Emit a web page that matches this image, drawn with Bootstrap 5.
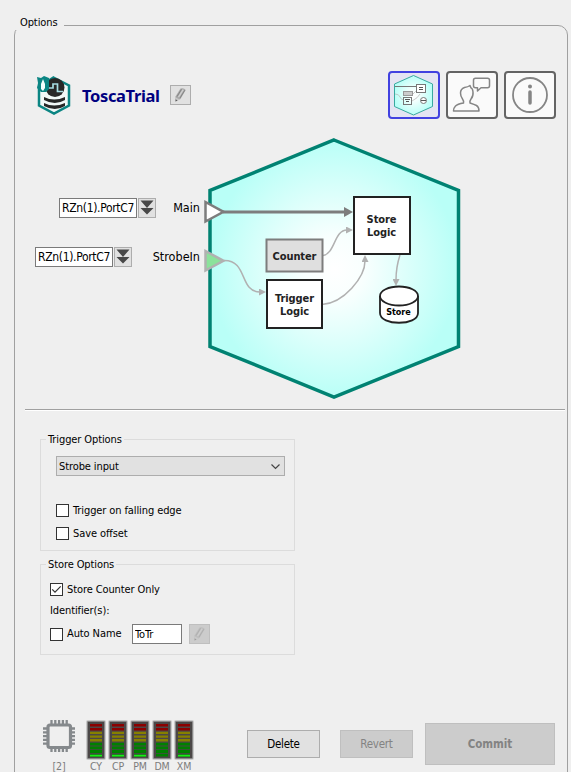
<!DOCTYPE html>
<html lang="en">
<head>
<meta charset="utf-8">
<title>Options</title>
<link href="https://cdn.jsdelivr.net/npm/bootstrap@5.3.0/dist/css/bootstrap.min.css" rel="stylesheet">
<style>
html,body{height:772px;overflow:hidden}
body{background:#efefef;color:#000;font:11px/14px "DejaVu Sans Condensed","DejaVu Sans",sans-serif;font-stretch:condensed;letter-spacing:-.1px}
svg{display:block;flex:none}
.options-box{margin:0 3px 0 14px;height:760px;border:1px solid #a0a0a0;border-radius:10px}
.box-title{width:max-content;background:#efefef;white-space:nowrap;height:14px}
.options-box>.box-title{margin:-10px 0 0 -1px;padding:0 8px 0 6px;width:50px}
.head-row{margin:41px 11px 0 21px;height:48px}
.unit-name{font:bold 16.5px/22px "Noto Sans","Open Sans",sans-serif;color:#000080;letter-spacing:-.35px;width:77px;margin:2px 11px 0 10px;white-space:nowrap}
.tool{padding:0;border:1px solid #adadad;border-radius:0;background:#e1e1e1;display:flex;align-items:center;justify-content:center}
.tool:disabled{background:#ccc;border-color:#bfbfbf;opacity:1}
.tool-edit{width:21px;height:20px}
.tool-drop{width:18px;height:20px}
.view-btn{width:52px;height:48px;padding:0;border:2px solid #646464;border-radius:4px;background:#fafafa;display:flex;align-items:center;justify-content:center}
.view-btn.chosen{border-color:#4141e0;background:#e4e4f2}
.diagram-row{margin-left:10px;height:290px}
.ports{width:175px;padding-top:79px;font-size:12.5px;letter-spacing:0}
.port{height:20px}
.port+.port{margin-top:29px}
.field{border:1px solid #7a7a7a;border-radius:0;background:#fff;color:#000;padding:0 2px;height:20px;font:inherit;letter-spacing:inherit;outline:0;min-width:0}
.port .field{width:78px;margin-right:1px;font-size:12px;letter-spacing:-.33px}
.port-main{width:141px}.port-strobe{width:165px}
.port-label{white-space:nowrap}
.rule{height:2px;background:#a0a0a0;border-bottom:1px solid #fff;margin:0 2px 0 10px}
.group{width:255px;margin-left:25px;border:1px solid #dcdcdc}
.group>.box-title{margin:-7px 0 0 5px;padding:0 2px}
.pick{width:229px;height:20px;margin:9px 0 0 15px;padding:1px 4px 0 2px;border:1px solid #adadad;border-radius:0;background:#e1e1e1;color:#000;font:inherit;letter-spacing:inherit}
.tick{height:13px;white-space:nowrap}
.tick .form-check-input{width:13px;height:13px;margin:0 4px 0 0;border:1px solid #333;border-radius:0;background-color:#fff;float:none;flex:none}
.tick .form-check-input:checked{background-size:11px;background-image:url("data:image/svg+xml,%3Csvg xmlns='http://www.w3.org/2000/svg' viewBox='0 0 11 11'%3E%3Cpath d='M1.2 5.4 4 8.2 9.7 2.4' fill='none' stroke='%23333' stroke-width='1.2'/%3E%3C/svg%3E")}
.foot{margin:65px 12px 0 28px;color:#7c7c7c;font-size:10.5px;line-height:10px}
.foot-label{height:10px}
.cmd{padding:0;border:1px solid #adadad;border-radius:0;background:#e1e1e1;color:#000;width:73px;height:28px;font:11.5px/14px "DejaVu Sans Condensed","DejaVu Sans",sans-serif;letter-spacing:-.25px}
.cmd:disabled{background:#ccc;border-color:#bfbfbf;color:#838383;opacity:1}
.cmd-commit{width:130px;height:42px;font-weight:bold;letter-spacing:-.05px}
.meter{width:22px}
</style>
</head>
<body>
<svg width="0" height="0" class="position-absolute">
<defs>
<radialGradient id="glow" gradientUnits="objectBoundingBox"><stop offset="0" stop-color="#fff"/><stop offset=".25" stop-color="#f8fffe"/><stop offset="1" stop-color="#b9fff7"/></radialGradient>
<symbol id="pencil" viewBox="0 0 19 18"><path d="M4.5 15.500 4.500 10.500 9.500 2.500Q13 1.500 14.700 4L9.500 13Z" fill="#a8a8a8"/><path d="M6 10.500 10.500 3.300M9 12l4.800-7.800" stroke="#858585"/><path d="m7.500 11.200 4.700-7.500" stroke="#d0d0d0" stroke-width="1.300"/><path d="m4.800 11.500 3.900 2-4.200 2Z" fill="#c9c9c9"/><path d="m4.500 15.500.2-2.300 1.800 1.200Z" fill="#555"/></symbol>
<symbol id="drop" viewBox="0 0 16 18"><path d="M1.500 1.500h13L8 9ZM1.500 9h13L8 15.500Z" fill="#484848"/><path d="M2 8.500h4.500M9.500 8.500H14" stroke="#ddd"/></symbol>
<symbol id="bars" viewBox="0 0 22 41"><rect x="1" y="0" width="20" height="40" rx="2" fill="#c9c9c9"/><rect x="2" y="1" width="18" height="38" rx="1" fill="#888"/><rect x="3" y="2" width="16" height="36" fill="#4b4747"/>
<path d="M5 4h12v2.400H5ZM5 8h12v2.400H5Z" fill="#8b0000"/><path d="M5 11.700h12v2.400H5ZM5 15.400h12v2.400H5ZM5 19h12v2.400H5Z" fill="#868000"/><path d="M5 22.700h12v2.800H5ZM5 26.400h12v2.800H5ZM5 30.100h12v2.800H5ZM5 33.800h12V36.600H5Z" fill="#008000"/></symbol>
<symbol id="bars-lit" viewBox="0 0 22 41"><use href="#bars"/><path d="M5 33.500h12v1H5Z" fill="#4b4747"/><path d="M5 34.800h12v1.700H5Z" fill="#16ef16"/></symbol>
</defs>
</svg>
<main class="d-flex flex-column" style="padding-top:25px">
<div class="options-box" role="group" aria-labelledby="t-options">
<div class="box-title" id="t-options">Options</div>
<div class="head-row d-flex align-items-center">
  <svg width="36" height="42" viewBox="0 0 36 42"><path d="M17.500 3.500 33 11.500v20L18 39.500 3 31.500V13Z" fill="#f1f8f7" stroke="#0b8583" stroke-width="2.500"/><circle cx="19" cy="13.500" r="9.500" fill="#272727"/><path d="M12 14h5V10h4.500v7.500H27" fill="none" stroke="#a7dce2" stroke-width="1.700"/><path d="M8 23q10 5 21 0v3q-10 6-21 0ZM8 29q10 5 21 0v3q-10 6-21 0Z" fill="#272727"/><path d="M1 3 5 4 8 2l5 2v11l-3 3H5l-4-4 1-5Z" fill="#0b8583"/><path d="M7 5 5 10v5l2 2 2-3v-4Z" fill="#f4fffd"/></svg>
  <h1 class="unit-name">ToscaTrial</h1>
  <button class="btn tool tool-edit" type="button" aria-label="Rename"><svg width="19" height="18"><use href="#pencil"/></svg></button>
  <div class="d-flex ms-auto" style="gap:6px">
    <button class="btn view-btn chosen" type="button" aria-label="Diagram"><svg width="48" height="44" viewBox="0 0 48 44"><path d="M23.500 2.500 42.500 11v22.500L23.500 42 4.500 33.500V11Z" fill="url(#glow)" stroke="#39a99f"/><path d="M5 13.500h21" stroke="#777"/><path d="M5 21q4 0 5 3t4 3M23 21q3-3 4-4M22 28q6-3 8-7" stroke="#bbb" fill="none" stroke-width=".8"/><rect x="26.500" y="11.500" width="9" height="8" fill="#fff" stroke="#777"/><path d="M29 14.500h4M29 16.500h4M15 26.500h5M16 28.500h3" stroke="#555"/><rect x="13.500" y="18.500" width="9" height="4" fill="#ccc" stroke="#999"/><rect x="13.500" y="24.500" width="8" height="7" fill="none" stroke="#777"/><circle cx="33.500" cy="27.500" r="3" fill="#fff" stroke="#777"/><path d="M31 27.500h5" stroke="#555"/></svg></button>
    <button class="btn view-btn" type="button" aria-label="Comments"><svg width="48" height="44" viewBox="0 0 48 44" fill="none" stroke="#858585" stroke-width="1.500" stroke-linejoin="round"><path d="M27.500 5.200h12q2 0 2 2v5.600q0 2-2 2h-6.500L29.500 18v-3.200h-2q-2 0-2-2V7.200q0-2 2-2ZM22 12.500q-2 1.500-5.500 2-4 1.500-4 5.500 0 3.500 2 6 1.500 2 1 4-6 1-8 3-2 2-2 5H31q0-4-2.500-5.500-2-1-6.500-2.500-.5-2 1-4Q25.500 23 25 19t-2-4Z"/></svg></button>
    <button class="btn view-btn" type="button" aria-label="Information"><svg width="48" height="44" viewBox="0 0 48 44"><circle cx="24" cy="22" r="17" fill="none" stroke="#858585" stroke-width="1.800"/><circle cx="24" cy="13.500" r="2" fill="#858585"/><path d="M24 19v11" stroke="#858585" stroke-width="3.500" stroke-linecap="round"/></svg></button>
  </div>
</div>
<div class="diagram-row d-flex">
  <div class="ports d-flex flex-column align-items-end">
    <div class="port port-main d-flex align-items-center"><input class="field" value="RZn(1).PortC7" aria-label="Main source"><button class="btn tool tool-drop me-auto" type="button" aria-label="Choose"><svg width="16" height="18"><use href="#drop"/></svg></button><span class="port-label">Main</span></div>
    <div class="port port-strobe d-flex align-items-center"><input class="field" value="RZn(1).PortC7" aria-label="Strobe source"><button class="btn tool tool-drop me-auto" type="button" aria-label="Choose"><svg width="16" height="18"><use href="#drop"/></svg></button><span class="port-label">StrobeIn</span></div>
  </div>
  <svg width="270" height="280" viewBox="200 119 270 280" font-family="DejaVu Sans Condensed, DejaVu Sans, sans-serif" font-weight="bold" font-size="11" text-anchor="middle" fill="#222" letter-spacing="-.1">
    <defs><marker id="tip" viewBox="0 0 7 7" refX="1" refY="3.500" markerWidth="7" markerHeight="7" markerUnits="userSpaceOnUse" orient="auto"><path d="M0 0 7 3.500 0 7Z" fill="#b1b1b1"/></marker></defs>
    <path d="M334 140 458.500 190.500V346.500L334 397 210 346.500V190.500Z" fill="url(#glow)" stroke="#008272" stroke-width="3.500"/>
    <path d="M223 212H346" stroke="#7d7d7d" stroke-width="3"/><path d="m344 207 9 5-9 5Z" fill="#7d7d7d"/>
    <path d="M205.500 202v19.500l18-9.700Z" fill="#fff" stroke="#7d7d7d" stroke-width="2.500"/>
    <path d="M205.500 251v19.500l18-9.700Z" fill="#8be29b" stroke="#b1b1b1" stroke-width="2.500"/>
    <g fill="none" stroke="#b1b1b1" stroke-width="1.500" marker-end="url(#tip)"><path d="M224 260.500C248 260 239 292 260 292"/><path d="M323 255.500C335 254 334 230 347 230"/><path d="M322 304.500C344 303 365 277 365 261"/><path d="M400 255Q396 267 396 280"/></g>
    <rect x="354" y="197" width="56" height="57" fill="#fff" stroke="#222" stroke-width="2"/>
    <rect x="266.500" y="239.500" width="56" height="32" fill="#dfdfdf" stroke="#7d7d7d" stroke-width="2"/>
    <rect x="267" y="280" width="55" height="48" fill="#fff" stroke="#222" stroke-width="2"/>
    <path d="M380 296v17c0 13 38 13 38 0v-17" fill="#fff" stroke="#222" stroke-width="1.800"/><ellipse cx="399" cy="296" rx="19" ry="9.500" fill="#fff" stroke="#222" stroke-width="1.800"/>
    <text x="381.500" y="223">Store</text><text x="381.500" y="236">Logic</text><text x="294.500" y="260">Counter</text><text x="294.500" y="302">Trigger</text><text x="294.500" y="315">Logic</text><text x="398.500" y="315" font-size="9" fill="#000">Store</text>
  </svg>
</div>
<div class="rule"></div>
<div class="group" style="height:112px;margin-top:28px" role="group" aria-labelledby="t-trigger">
  <div class="box-title" id="t-trigger">Trigger Options</div>
  <button class="btn pick d-flex align-items-center justify-content-between" type="button"><span>Strobe input</span><svg width="9" height="6"><path d="m.5.500 4 4 4-4" fill="none" stroke="#444" stroke-width="1.200"/></svg></button>
  <label class="tick d-flex align-items-center" style="margin:28px 0 10px 15px"><input class="form-check-input" type="checkbox">Trigger on falling edge</label>
  <label class="tick d-flex align-items-center" style="margin-left:15px"><input class="form-check-input" type="checkbox">Save offset</label>
</div>
<div class="group" style="height:91px;margin-top:13px" role="group" aria-labelledby="t-store">
  <div class="box-title" id="t-store">Store Options</div>
  <label class="tick d-flex align-items-center" style="margin:11px 0 8px 9px"><input class="form-check-input" type="checkbox" checked>Store Counter Only</label>
  <div style="margin:0 0 6px 9px">Identifier(s):</div>
  <div class="d-flex align-items-center" style="margin-left:9px">
    <label class="tick d-flex align-items-center" style="width:82px"><input class="form-check-input" type="checkbox">Auto Name</label>
    <input class="field" value="ToTr" aria-label="Identifier" style="width:50px;margin-right:7px">
    <button class="btn tool tool-edit" type="button" disabled aria-label="Edit identifier"><svg width="19" height="18" opacity=".4"><use href="#pencil"/></svg></button>
  </div>
</div>
<div class="foot d-flex align-items-start">
  <div class="d-flex flex-column align-items-center me-2" style="width:32px"><svg width="32" height="41" viewBox="0 0 32 41"><path d="M8.500 0v32M12.300 0v32M16.100 0v32M19.900 0v32M23.700 0v32M0 8.500h32M0 12.300h32M0 16.100h32M0 19.900h32M0 23.700h32" stroke="#85898c" stroke-width="2.300"/><rect x="5" y="5" width="22.500" height="22.500" rx="2" fill="#efefef" stroke="#85898c" stroke-width="3.200"/></svg><span class="foot-label">[2]</span></div>
  <div class="d-flex" style="margin-left:2px">
    <div class="meter d-flex flex-column align-items-center"><svg width="22" height="41"><use href="#bars-lit"/></svg><span class="foot-label">CY</span></div>
    <div class="meter d-flex flex-column align-items-center"><svg width="22" height="41"><use href="#bars-lit"/></svg><span class="foot-label">CP</span></div>
    <div class="meter d-flex flex-column align-items-center"><svg width="22" height="41"><use href="#bars-lit"/></svg><span class="foot-label">PM</span></div>
    <div class="meter d-flex flex-column align-items-center"><svg width="22" height="41"><use href="#bars"/></svg><span class="foot-label">DM</span></div>
    <div class="meter d-flex flex-column align-items-center"><svg width="22" height="41"><use href="#bars-lit"/></svg><span class="foot-label">XM</span></div>
  </div>
  <div class="d-flex align-items-center ms-auto" style="height:42px;margin-top:3px">
    <button class="btn cmd" type="button">Delete</button>
    <button class="btn cmd" type="button" disabled style="margin:0 12px 0 20px">Revert</button>
    <button class="btn cmd cmd-commit" type="button" disabled>Commit</button>
  </div>
</div>
</div>
</main>
<script src="https://cdn.jsdelivr.net/npm/bootstrap@5.3.0/dist/js/bootstrap.bundle.min.js"></script>
</body>
</html>
